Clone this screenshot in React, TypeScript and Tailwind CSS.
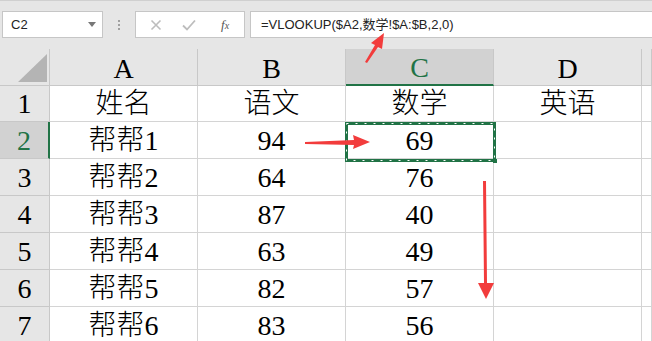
import React from "react";

const serif = "font-['Liberation_Serif','Noto_Sans_CJK_SC',serif]";

const rows: [string, string, string][] = [
  ["帮帮1", "94", "69"],
  ["帮帮2", "64", "76"],
  ["帮帮3", "87", "40"],
  ["帮帮4", "63", "49"],
  ["帮帮5", "82", "57"],
  ["帮帮6", "83", "56"],
];

function HeadCell({ label, active }: { label: string; active?: boolean }) {
  return (
    <div
      className={
        "flex items-end justify-center pb-[2px] border-r border-[#c8c8c8] " +
        (active ? "bg-[#d2d2d2] text-[#217346] border-b-2 border-b-[#217346]" : "border-b border-b-[#c8c8c8]")
      }
    >
      {label}
    </div>
  );
}

function RowHead({ n, active }: { n: number; active?: boolean }) {
  return (
    <div
      className={
        "flex items-end justify-center pb-[3px] border-b border-[#c8c8c8] " +
        (active ? "bg-[#d2d2d2] text-[#217346] border-r-2 border-r-[#217346]" : "bg-[#e6e6e6] border-r border-r-[#c8c8c8]")
      }
    >
      {n}
    </div>
  );
}

function Cell({ children }: { children?: React.ReactNode }) {
  return (
    <div className="flex items-end justify-center pb-[3px] border-r border-b border-[#d4d4d4] bg-white font-light">
      {children}
    </div>
  );
}

export default function App() {
  return (
    <div className="relative w-[652px] h-[341px] overflow-hidden bg-[#e6e6e6] border-t border-[#d0d0d0]">
      {/* Formula bar */}
      <div className="flex items-center h-[48px] pt-[10px] pb-[11px] pl-[2px] font-['Liberation_Sans','Noto_Sans_CJK_SC',sans-serif] text-[13px] text-[#222]">
        <div className="flex items-center justify-between w-[101px] h-[27px] bg-white border border-[#c6c6c6] pl-[8px] pr-[6px]">
          <span>C2</span>
          <span className="w-0 h-0 border-x-[4px] border-x-transparent border-t-[5px] border-t-[#777]" />
        </div>
        <div className="flex flex-col gap-[2px] mx-[15px]">
          <span className="w-[2px] h-[2px] bg-[#a0a0a0]" />
          <span className="w-[2px] h-[2px] bg-[#a0a0a0]" />
          <span className="w-[2px] h-[2px] bg-[#a0a0a0]" />
        </div>
        <div className="flex items-center w-[110px] h-[27px] bg-white border border-[#c6c6c6]">
          <svg width="12" height="12" viewBox="0 0 12 12" className="ml-[14px]">
            <path d="M1.5 1.5L10.5 10.5M10.5 1.5L1.5 10.5" stroke="#bdbdbd" strokeWidth="1.6" />
          </svg>
          <svg width="14" height="12" viewBox="0 0 14 12" className="ml-[20px]">
            <path d="M1 6.5L5 10.5L13 1.5" stroke="#bdbdbd" strokeWidth="1.8" fill="none" />
          </svg>
          <span className="ml-[25px] font-['Liberation_Serif',serif] italic text-[13px] text-[#555]">
            f<span className="text-[10px]">x</span>
          </span>
        </div>
        <div className="flex items-center flex-1 h-[27px] ml-[5px] bg-white border border-[#c6c6c6] border-r-0 pl-[10px]">
          =VLOOKUP($A2,数学!$A:$B,2,0)
        </div>
      </div>

      {/* Sheet grid */}
      <div
        className={
          "grid grid-cols-[50px_148px_148px_148px_148px_10px] grid-rows-[37px_36px_37px_37px_37px_37px_37px_37px] text-[28px] leading-none text-black " +
          serif
        }
      >
        <div className="relative border-r border-b border-[#c8c8c8]">
          <div className="absolute left-[18px] top-[5px] w-[29px] h-[28px] bg-[#b4b4b4] [clip-path:polygon(100%_0,100%_100%,0_100%)]" />
        </div>
        <HeadCell label="A" />
        <HeadCell label="B" />
        <HeadCell label="C" active />
        <HeadCell label="D" />
        <HeadCell label="" />

        <RowHead n={1} />
        <Cell>姓名</Cell>
        <Cell>语文</Cell>
        <Cell>数学</Cell>
        <Cell>英语</Cell>
        <Cell />

        {rows.map(([name, yw, sx], i) => (
          <React.Fragment key={name}>
            <RowHead n={i + 2} active={i === 0} />
            <Cell>{name}</Cell>
            <Cell>{yw}</Cell>
            <Cell>{sx}</Cell>
            <Cell />
            <Cell />
          </React.Fragment>
        ))}
      </div>

      {/* Copy marquee around C2 and red annotation arrows */}
      <svg className="absolute inset-0 pointer-events-none" width="652" height="341">
        <rect x="346.5" y="122.5" width="148" height="37" fill="none" stroke="#217346" strokeWidth="3" />
        <rect x="346.5" y="122.5" width="148" height="37" fill="none" stroke="#ffffff" strokeWidth="1" strokeDasharray="2 7" />
        <rect x="493" y="158" width="4" height="4" fill="#217346" />
        <polygon points="305,141 354,139 353,134 370,141 353,148 354,144 305,143" fill="#f23c3c" />
        <polygon points="483,180 486,180 487,282 494,282 486,298 478,282 484,282" fill="#f23c3c" />
        <polygon points="365,61 375,44 371,42 384,32 382,48 378,46 367,62" fill="#f23c3c" />
      </svg>
    </div>
  );
}
